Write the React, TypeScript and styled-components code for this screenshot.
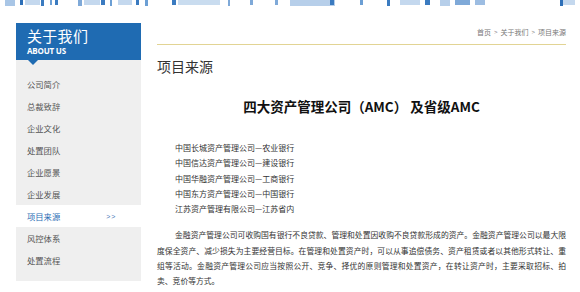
import React from "react";
import styled, { createGlobalStyle } from "styled-components";

const Global = createGlobalStyle`
  html, body { margin: 0; padding: 0; background: #fff; }
  body { font-family: "Noto Sans CJK SC", "Noto Sans", sans-serif; color: #333; }
`;

const Page = styled.div`
  width: 580px;
  height: 292px;
  overflow: hidden;
  position: relative;
`;

const Strip = styled.svg`
  display: block;
  width: 580px;
  height: 6px;
`;

const Body = styled.div`
  display: flex;
  align-items: flex-start;
`;

const Sidebar = styled.aside`
  flex: none;
  width: 125px;
  margin-left: 16px;
  margin-top: 17px;
  background: #efefef;
`;

const SideHead = styled.div`
  position: relative;
  height: 37px;
  background: #1f6bb2;
  padding: 5px 0 0 11px;
  box-sizing: border-box;
  color: #fff;
  &::after {
    content: "";
    position: absolute;
    left: 12px;
    bottom: -5px;
    border-left: 5px solid transparent;
    border-right: 5px solid transparent;
    border-top: 5px solid #1f6bb2;
  }
`;

const HeadCn = styled.div`
  font-size: 15px;
  line-height: 16px;
  height: 16px;
  letter-spacing: 0.3px;
`;

const HeadEn = styled.div`
  font-family: "Open Sans", "Liberation Sans", sans-serif;
  font-weight: 700;
  font-size: 8px;
  line-height: 9px;
  height: 9px;
  margin-top: 2px;
  letter-spacing: -0.2px;
`;

const Menu = styled.ul`
  list-style: none;
  margin: 0;
  padding: 13px 0 10px;
`;

const Item = styled.li<{ $active?: boolean }>`
  height: 22px;
  display: flex;
  align-items: center;
  padding-left: 11px;
  font-size: 8.3px;
  color: ${(p) => (p.$active ? "#2a6cb4" : "#555")};
  background: ${(p) => (p.$active ? "#fff" : "transparent")};
`;

const Arrow = styled.span`
  margin-left: 46px;
  font-family: "Liberation Sans", sans-serif;
  font-size: 7px;
  color: #4a7ab8;
  letter-spacing: 1px;
`;

const Main = styled.main`
  flex: none;
  width: 409px;
  margin-left: 16px;
`;

const Crumb = styled.div`
  height: 39px;
  box-sizing: border-box;
  padding-bottom: 7px;
  display: flex;
  align-items: flex-end;
  justify-content: flex-end;
  font-size: 7px;
  line-height: 9px;
  color: #777;
  border-bottom: 1px solid #e2d494;
`;

const Sep = styled.span`
  font-family: "Liberation Sans", sans-serif;
  margin: 0 3px;
  font-size: 6px;
`;

const Title = styled.h2`
  margin: 12px 0 0;
  font-size: 14px;
  line-height: 18px;
  font-weight: 400;
  color: #333;
`;

const Heading = styled.h3`
  margin: 22px 0 0;
  text-align: center;
  font-size: 13.5px;
  line-height: 18px;
  font-weight: 700;
  color: #111;
`;

const List = styled.div`
  margin: 25px 0 0 18px;
  font-size: 8px;
  line-height: 15.3px;
  color: #333;
`;

const Para = styled.p`
  margin: 11px 0 0;
  font-size: 7.8px;
  line-height: 15.3px;
  text-indent: 18px;
  text-align: justify;
  color: #333;
`;

const menu = ["公司简介", "总裁致辞", "企业文化", "处置团队", "企业愿景", "企业发展", "项目来源", "风控体系", "处置流程"];

const stripRects: [number, number, string][] = [
  [5, 10, "#a9c6e6"], [20, 3, "#2d6fb8"], [25, 15, "#c4d8ee"], [41, 3, "#3b7bc0"], [50, 2, "#6c9fd4"],
  [55, 3, "#3b7bc0"], [78, 4, "#7fa9d8"], [84, 16, "#c4d8ee"], [101, 4, "#3b7bc0"], [110, 2, "#6c9fd4"],
  [118, 14, "#c4d8ee"], [136, 3, "#3b7bc0"], [145, 3, "#6c9fd4"], [172, 4, "#3b7bc0"], [178, 42, "#c9dcef"],
  [228, 2, "#7fa9d8"], [250, 3, "#7fa9d8"], [275, 3, "#7fa9d8"], [290, 45, "#b7cfea"], [330, 4, "#3b7bc0"],
  [360, 3, "#6c9fd4"], [387, 3, "#3b7bc0"], [400, 20, "#c4d8ee"], [425, 5, "#3b7bc0"], [440, 10, "#b7cfea"],
  [455, 15, "#7fa9d8"], [475, 10, "#9dbde2"], [560, 3, "#2d6fb8"], [563, 12, "#c4d8ee"],
];

export default function App() {
  return (
    <Page>
      <Global />
      <Strip viewBox="0 0 580 6">
        {stripRects.map(([x, w, c], i) => (
          <rect key={i} x={x} y={0} width={w} height={i % 3 === 0 ? 6 : 5} fill={c} />
        ))}
      </Strip>
      <Body>
        <Sidebar>
          <SideHead>
            <HeadCn>关于我们</HeadCn>
            <HeadEn>ABOUT US</HeadEn>
          </SideHead>
          <Menu>
            {menu.map((m) => (
              <Item key={m} $active={m === "项目来源"}>
                {m}
                {m === "项目来源" && <Arrow>&gt;&gt;</Arrow>}
              </Item>
            ))}
          </Menu>
        </Sidebar>
        <Main>
          <Crumb>
            首页<Sep>&gt;</Sep>关于我们<Sep>&gt;</Sep>项目来源
          </Crumb>
          <Title>项目来源</Title>
          <Heading>四大资产管理公司（AMC） 及省级AMC</Heading>
          <List>
            <div>中国长城资产管理公司—农业银行</div>
            <div>中国信达资产管理公司—建设银行</div>
            <div>中国华融资产管理公司—工商银行</div>
            <div>中国东方资产管理公司—中国银行</div>
            <div>江苏资产管理有限公司—江苏省内</div>
          </List>
          <Para>
            金融资产管理公司可收购国有银行不良贷款、管理和处置因收购不良贷款形成的资产。金融资产管理公司以最大限度保全资产、减少损失为主要经营目标。在管理和处置资产时，可以从事追偿债务、资产租赁或者以其他形式转让、重组等活动。金融资产管理公司应当按照公开、竞争、择优的原则管理和处置资产，在转让资产时，主要采取招标、拍卖、竞价等方式。
          </Para>
        </Main>
      </Body>
    </Page>
  );
}
